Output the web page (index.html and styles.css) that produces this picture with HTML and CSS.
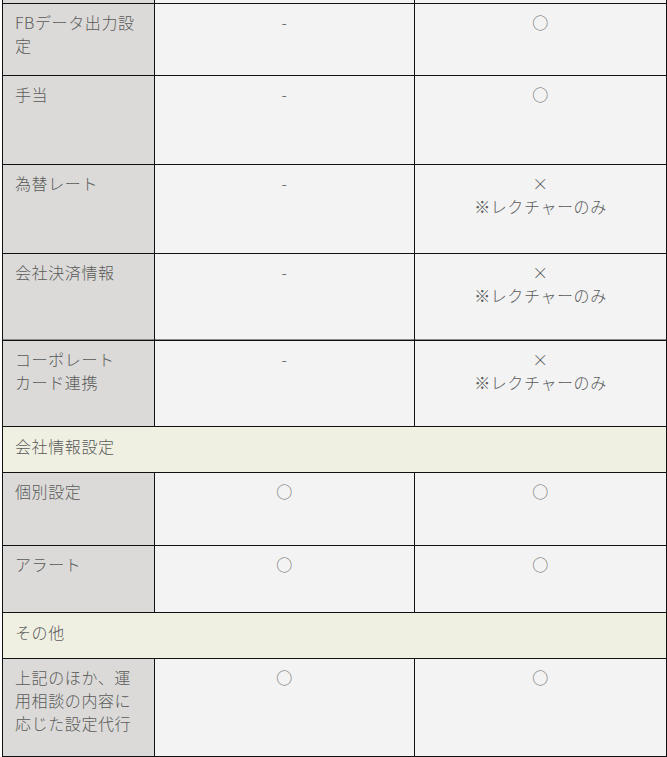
FILE: index.html
```html
<!DOCTYPE html>
<html lang="ja">
<head>
<meta charset="utf-8">
<link rel="stylesheet" href="styles.css">
</head>
<body>
<table class="plan">
  <colgroup>
    <col class="c-name">
    <col class="c-a">
    <col class="c-b">
  </colgroup>
  <tbody>
    <tr class="stub"><td class="name"></td><td></td><td></td></tr>
    <tr class="h72"><td class="name">FBデータ出力設<br>定</td><td>-</td><td>○</td></tr>
    <tr class="h89"><td class="name">手当</td><td>-</td><td>○</td></tr>
    <tr class="h89"><td class="name">為替レート</td><td>-</td><td>×<br>※レクチャーのみ</td></tr>
    <tr class="h87 before-split"><td class="name">会社決済情報</td><td>-</td><td>×<br>※レクチャーのみ</td></tr>
    <tr class="h86"><td class="name">コーポレート<br>カード連携</td><td>-</td><td>×<br>※レクチャーのみ</td></tr>
    <tr class="section"><td colspan="3">会社情報設定</td></tr>
    <tr class="h73"><td class="name">個別設定</td><td>○</td><td>○</td></tr>
    <tr class="h67"><td class="name">アラート</td><td>○</td><td>○</td></tr>
    <tr class="section"><td colspan="3">その他</td></tr>
    <tr class="h98"><td class="name">上記のほか、運<br>用相談の内容に<br>応じた設定代行</td><td>○</td><td>○</td></tr>
  </tbody>
</table>
</body>
</html>
```
FILE: styles.css
```css
html, body {
  margin: 0;
  padding: 0;
  background: #ffffff;
}
body {
  font-family: "Noto Sans CJK JP", "Noto Sans", sans-serif;
  font-size: 16px;
  font-weight: 300;
  letter-spacing: 0.6px;
  color: #5a5a5a;
}
.plan {
  border-collapse: collapse;
  table-layout: fixed;
  width: 664px;
  margin-left: 2px;
}
.c-name { width: 152px; }
.c-a { width: 260px; }
.c-b { width: 252px; }
.plan td {
  border: 1px solid #111111;
  background: #f3f3f3;
  vertical-align: top;
  text-align: center;
  padding: 7px 12px 0 12px;
  line-height: 23px;
  box-sizing: border-box;
}
.plan td.name {
  background: #dbdad8;
  text-align: left;
}
.plan .stub td {
  height: 3px;
  padding: 0;
  border-top: none;
  line-height: 0;
  font-size: 0;
}
.h72 td { height: 72px; }
.h89 td { height: 89px; }
.h87 td { height: 87px; }
.h86 td { height: 86px; }
.h73 td { height: 73px; }
.h67 td { height: 67px; }
.h98 td { height: 98px; }
.before-split td {
  box-shadow: inset 0 -1px 0 #8a8a8a;
}
.plan .section td {
  background: #f0f0e2;
  text-align: left;
  height: 46px;
  padding-top: 8px;
}
```
